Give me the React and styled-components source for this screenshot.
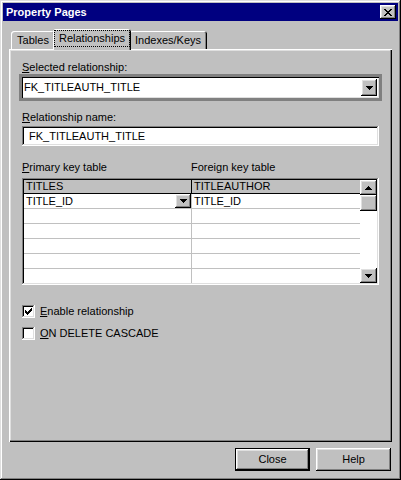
import React from 'react';
import styled, { createGlobalStyle, css } from 'styled-components';

const Global = createGlobalStyle`
  html, body { margin: 0; padding: 0; background: #c0c0c0; }
  body { font-family: "Liberation Sans", Arial, sans-serif; font-size: 11px; color: #000; }
  * { box-sizing: border-box; }
  u { text-underline-offset: 1px; }
`;

const raised = css`
  box-shadow: inset -1px -1px #000, inset 1px 1px #fff, inset -2px -2px #808080, inset 2px 2px #dfdfdf;
`;
const sunken = css`
  box-shadow: inset -1px -1px #fff, inset 1px 1px #808080, inset -2px -2px #dfdfdf, inset 2px 2px #000;
`;

const Window = styled.div`
  width: 401px;
  height: 480px;
  padding: 3px;
  background: #c0c0c0;
  display: flex;
  flex-direction: column;
  box-shadow: inset -1px -1px #000, inset 1px 1px #dfdfdf, inset -2px -2px #808080, inset 2px 2px #fff;
`;

const TitleBar = styled.div`
  height: 18px;
  background: #000080;
  display: flex;
  align-items: center;
  justify-content: space-between;
  padding: 0 2px 0 3px;
`;

const TitleText = styled.span`
  color: #fff;
  font-weight: bold;
  font-size: 11px;
  line-height: 13px;
`;

const CaptionButton = styled.div`
  width: 16px;
  height: 14px;
  background: #c0c0c0;
  ${raised};
  display: flex;
  align-items: center;
  justify-content: center;
  padding-right: 1px;
`;

const Body = styled.div`
  flex: 1;
  padding: 0 6px;
  display: flex;
  flex-direction: column;
`;

const TabStrip = styled.div`
  margin-top: 8px;
  height: 20px;
  display: flex;
  align-items: flex-end;
  padding-left: 2px;
`;

const Tab = styled.div`
  position: relative;
  z-index: ${(p) => (p.$selected ? 2 : 1)};
  width: ${(p) => p.$w + (p.$selected ? 4 : 0)}px;
  height: ${(p) => (p.$selected ? 21 : 18)}px;
  margin: 0 ${(p) => (p.$selected ? -2 : 0)}px ${(p) => (p.$selected ? -1 : 0)}px;
  padding-bottom: ${(p) => (p.$selected ? 3 : 0)}px;
  background: #c0c0c0;
  border-radius: 3px 3px 0 0;
  box-shadow: inset 1px 1px #fff, inset -1px 0 #000, inset -2px 0 #808080;
  display: flex;
  align-items: center;
  justify-content: center;
  line-height: 13px;
`;

const FocusLabel = styled.span`
  outline: 1px dotted #000;
  padding: 1px 4px;
  line-height: 13px;
`;

const Panel = styled.div`
  height: 393px;
  padding: 12px 13px 0;
  display: flex;
  flex-direction: column;
  box-shadow: inset 1px 1px #fff, inset -1px -1px #000, inset -2px -2px #808080, inset 2px 2px #dfdfdf;
`;

const FieldLabel = styled.div`
  line-height: 13px;
  height: 13px;
  margin-top: ${(p) => p.$mt || 0}px;
  white-space: nowrap;
`;

const ComboFrame = styled.div`
  margin: 0 -3px;
  padding: 3px;
  background: #808080;
`;

const ComboField = styled.div`
  height: 21px;
  background: #fff;
  box-shadow: inset 1px 1px #000, inset -1px -1px #dfdfdf;
  display: flex;
  align-items: center;
  justify-content: space-between;
  padding: 0 2px 0 2px;
  line-height: 13px;
`;

const DropButton = styled.div`
  width: ${(p) => p.$w || 16}px;
  height: ${(p) => p.$h || 17}px;
  background: #c0c0c0;
  ${raised};
  display: flex;
  align-items: center;
  justify-content: center;
  flex: none;
`;

const TextInput = styled.div`
  margin-top: 2px;
  height: 20px;
  background: #fff;
  ${sunken};
  display: flex;
  align-items: center;
  padding: 0 7px;
  line-height: 13px;
`;

const ColumnLabels = styled.div`
  margin-top: 15px;
  display: grid;
  grid-template-columns: 169px 1fr;
  line-height: 13px;
  height: 13px;
`;

const Grid = styled.div`
  margin-top: 4px;
  height: 107px;
  padding: 2px;
  ${sunken};
  background: #fff;
  display: flex;
`;

const TableArea = styled.div`
  width: 336px;
  overflow: hidden;
  display: flex;
  flex-direction: column;
`;

const Row = styled.div`
  display: grid;
  grid-template-columns: 168px 168px;
  flex: none;
  height: ${(p) => (p.$header ? 14 : 15)}px;
  background: ${(p) => (p.$header ? '#c0c0c0' : '#fff')};
  border-bottom: 1px solid ${(p) => (p.$header ? '#000' : '#c0c0c0')};
`;

const Cell = styled.div`
  display: flex;
  align-items: center;
  justify-content: space-between;
  padding-left: 2px;
  line-height: 13px;
  white-space: nowrap;
  overflow: hidden;
  &:first-child {
    border-right: 1px solid ${(p) => (p.$header ? '#000' : '#c0c0c0')};
  }
`;

const ScrollBar = styled.div`
  width: 17px;
  display: flex;
  flex-direction: column;
  background: #fff;
`;

const ScrollButton = styled.div`
  height: ${(p) => p.$h}px;
  margin-bottom: ${(p) => p.$mb || 0}px;
  background: #c0c0c0;
  ${raised};
  display: flex;
  align-items: center;
  justify-content: center;
  flex: none;
`;

const ScrollTrack = styled.div`
  flex: 1;
  background: #fff;
`;

const CheckRow = styled.div`
  display: flex;
  align-items: center;
  gap: 5px;
  height: 13px;
  margin-top: ${(p) => p.$mt}px;
  line-height: 13px;
`;

const CheckBox = styled.div`
  width: 13px;
  height: 13px;
  background: #fff;
  ${sunken};
  display: flex;
  align-items: center;
  justify-content: center;
`;

const ButtonRow = styled.div`
  margin-top: 6px;
  display: flex;
  justify-content: flex-end;
  gap: 6px;
  padding-right: 1px;
`;

const PushButton = styled.div`
  width: 75px;
  height: 23px;
  background: #c0c0c0;
  display: flex;
  align-items: center;
  justify-content: center;
  line-height: 13px;
  ${(p) =>
    p.$default
      ? css`
          box-shadow: inset 0 0 0 1px #000, inset -2px -2px #000, inset 2px 2px #fff, inset -3px -3px #808080, inset 3px 3px #dfdfdf;
        `
      : raised};
`;

const Pixels = ({ w, h, rows }) => (
  <svg width={w} height={h} viewBox={`0 0 ${w} ${h}`} shapeRendering="crispEdges">
    {rows.map((r, y) =>
      r.split('').map((c, x) =>
        c === 'X' ? <rect key={`${x}-${y}`} x={x} y={y} width="1" height="1" fill="#000" /> : null
      )
    )}
  </svg>
);

const CloseGlyph = () => (
  <Pixels
    w={8}
    h={7}
    rows={['XX....XX', '.XX..XX.', '..XXXX..', '...XX...', '..XXXX..', '.XX..XX.', 'XX....XX']}
  />
);

const DownArrow = () => <Pixels w={7} h={4} rows={['XXXXXXX', '.XXXXX.', '..XXX..', '...X...']} />;
const UpArrow = () => <Pixels w={7} h={4} rows={['...X...', '..XXX..', '.XXXXX.', 'XXXXXXX']} />;

const CheckGlyph = () => (
  <Pixels
    w={7}
    h={7}
    rows={['......X', '.....XX', 'X...XXX', 'XX.XXX.', 'XXXXX..', '.XXX...', '..X....']}
  />
);

const emptyRows = [0, 1, 2, 3, 4];

export default function App() {
  return (
    <>
      <Global />
      <Window>
        <TitleBar>
          <TitleText>Property Pages</TitleText>
          <CaptionButton>
            <CloseGlyph />
          </CaptionButton>
        </TitleBar>
        <Body>
          <TabStrip>
            <Tab $w={44}>Tables</Tab>
            <Tab $w={74} $selected>
              <FocusLabel>Relationships</FocusLabel>
            </Tab>
            <Tab $w={78}>Indexes/Keys</Tab>
          </TabStrip>
          <Panel>
            <FieldLabel>
              <u>S</u>elected relationship:
            </FieldLabel>
            <ComboFrame>
              <ComboField>
                <span>FK_TITLEAUTH_TITLE</span>
                <DropButton>
                  <DownArrow />
                </DropButton>
              </ComboField>
            </ComboFrame>
            <FieldLabel $mt={10}>
              <u>R</u>elationship name:
            </FieldLabel>
            <TextInput>FK_TITLEAUTH_TITLE</TextInput>
            <ColumnLabels>
              <span>
                <u>P</u>rimary key table
              </span>
              <span>Foreign key table</span>
            </ColumnLabels>
            <Grid>
              <TableArea>
                <Row $header>
                  <Cell $header>TITLES</Cell>
                  <Cell $header>TITLEAUTHOR</Cell>
                </Row>
                <Row>
                  <Cell>
                    <span>TITLE_ID</span>
                    <DropButton $w={16} $h={14}>
                      <DownArrow />
                    </DropButton>
                  </Cell>
                  <Cell>TITLE_ID</Cell>
                </Row>
                {emptyRows.map((i) => (
                  <Row key={i}>
                    <Cell />
                    <Cell />
                  </Row>
                ))}
              </TableArea>
              <ScrollBar>
                <ScrollButton $h={15}>
                  <UpArrow />
                </ScrollButton>
                <ScrollButton $h={16} />
                <ScrollTrack />
                <ScrollButton $h={15}>
                  <DownArrow />
                </ScrollButton>
              </ScrollBar>
            </Grid>
            <CheckRow $mt={20}>
              <CheckBox>
                <CheckGlyph />
              </CheckBox>
              <span>
                <u>E</u>nable relationship
              </span>
            </CheckRow>
            <CheckRow $mt={9}>
              <CheckBox />
              <span>
                <u>O</u>N DELETE CASCADE
              </span>
            </CheckRow>
          </Panel>
          <ButtonRow>
            <PushButton $default>Close</PushButton>
            <PushButton>Help</PushButton>
          </ButtonRow>
        </Body>
      </Window>
    </>
  );
}
